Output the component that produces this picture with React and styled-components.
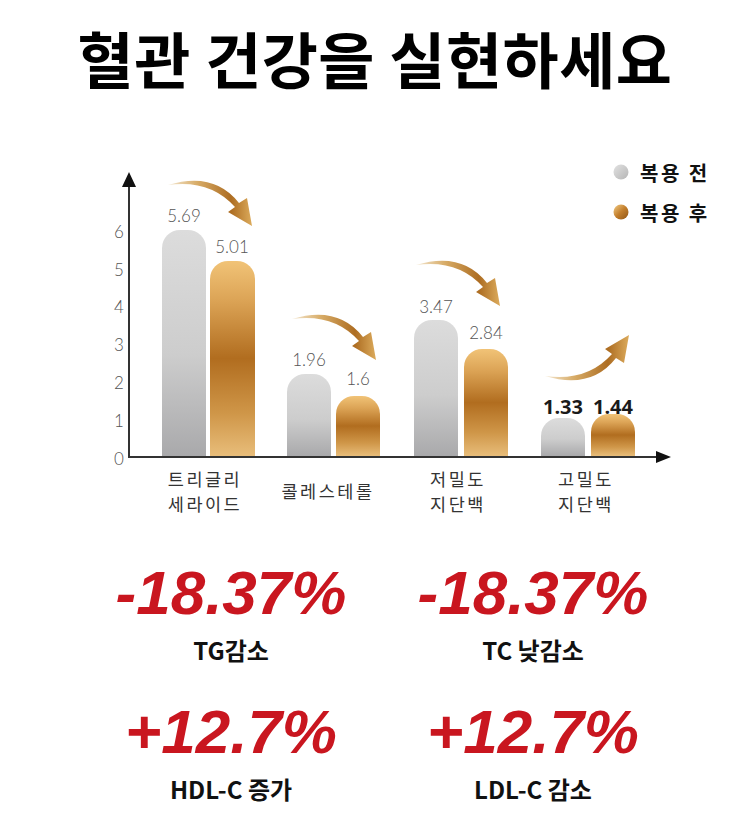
import React from "react";
import styled, { createGlobalStyle } from "styled-components";

const GlobalStyle = createGlobalStyle`
  body {
    margin: 0;
    background: #ffffff;
  }
`;

const Page = styled.div`
  width: 750px;
  height: 815px;
  background: #ffffff;
  font-family: "Noto Sans CJK KR", "Noto Sans", sans-serif;
  overflow: hidden;
`;

const Title = styled.h1`
  box-sizing: border-box;
  height: 120px;
  margin: 0;
  padding-bottom: 6px;
  display: flex;
  align-items: center;
  justify-content: center;
  font-size: 61px;
  font-weight: 700;
  color: #000;
  letter-spacing: 0.5px;
`;

const Chart = styled.svg`
  display: block;
  width: 750px;
  height: 410px;
`;

const Stats = styled.div`
  display: grid;
  grid-template-columns: 302px 302px;
  row-gap: 32px;
  margin: 28px 0 0 80px;
`;

const Stat = styled.div`
  display: flex;
  flex-direction: column;
  align-items: center;
`;

const Value = styled.div`
  font-family: "Liberation Sans", Arial, sans-serif;
  font-style: italic;
  font-weight: 700;
  font-size: 62px;
  line-height: 70px;
  color: #c9161f;
  white-space: nowrap;
`;

const Label = styled.div`
  margin-top: 7px;
  font-size: 24px;
  line-height: 30px;
  font-weight: 700;
  color: #111;
  white-space: nowrap;
`;

const GREY = "url(#greyBar)";
const GOLD = "url(#goldBar)";
const BOTTOM = 456;

const bars = [
  { x: 162, w: 44, top: 230, fill: GREY },
  { x: 210, w: 45, top: 261, fill: GOLD },
  { x: 287, w: 44, top: 374, fill: GREY },
  { x: 336, w: 44, top: 396, fill: GOLD },
  { x: 414, w: 44, top: 320, fill: GREY },
  { x: 464, w: 44, top: 349, fill: GOLD },
  { x: 541, w: 44, top: 418, fill: GREY },
  { x: 591, w: 44, top: 414, fill: GOLD },
];

const values = [
  { x: 184, y: 215, t: "5.69" },
  { x: 232, y: 246, t: "5.01" },
  { x: 309, y: 359, t: "1.96" },
  { x: 358, y: 378, t: "1.6" },
  { x: 436, y: 306, t: "3.47" },
  { x: 486, y: 332, t: "2.84" },
];

const arrows = [
  "translate(168 182)",
  "translate(292 316)",
  "translate(416 262)",
  "translate(545 379) scale(1 -1)",
];

const categories = [
  { x: 205, lines: ["트리글리", "세라이드"] },
  { x: 328, lines: ["콜레스테롤"] },
  { x: 458, lines: ["저밀도", "지단백"] },
  { x: 586, lines: ["고밀도", "지단백"] },
];

const stats = [
  { v: "-18.37%", l: "TG감소" },
  { v: "-18.37%", l: "TC 낮감소" },
  { v: "+12.7%", l: "HDL-C 증가" },
  { v: "+12.7%", l: "LDL-C 감소" },
];

function barPath({ x, w, top }) {
  const r = 18;
  return `M${x},${BOTTOM} V${top + r} A${r},${r} 0 0 1 ${x + r},${top} H${x + w - r} A${r},${r} 0 0 1 ${x + w},${top + r} V${BOTTOM} Z`;
}

// tapered curved arrow, tail at 0,3 and tip at 84,44
const ARROW = "M0,3 Q46,-11 71,21 L79,16 L84,44 L60,30 L67,25 Q42,-3 0,3 Z";

const numFont = { fontFamily: "Lato, 'Open Sans', sans-serif", fontWeight: 300 };

function BarChart() {
  return (
    <Chart viewBox="0 120 750 410">
      <defs>
        <linearGradient id="greyBar" x1="0" y1="0" x2="0" y2="1">
          <stop offset="0" stopColor="#dcdcdc" />
          <stop offset="0.55" stopColor="#cdcdcd" />
          <stop offset="1" stopColor="#a9a9ab" />
        </linearGradient>
        <linearGradient id="goldBar" x1="0" y1="0" x2="0" y2="1">
          <stop offset="0" stopColor="#f1c377" />
          <stop offset="0.2" stopColor="#dca456" />
          <stop offset="0.5" stopColor="#b16d1f" />
          <stop offset="0.78" stopColor="#cf9648" />
          <stop offset="1" stopColor="#e8bd7a" />
        </linearGradient>
        <linearGradient id="arrowFill" x1="0" y1="0" x2="1" y2="0">
          <stop offset="0" stopColor="#f4e8d2" />
          <stop offset="0.35" stopColor="#d7ab66" />
          <stop offset="0.75" stopColor="#ad6d22" />
          <stop offset="1" stopColor="#dcab5c" />
        </linearGradient>
        <linearGradient id="goldDot" x1="0" y1="0" x2="1" y2="1">
          <stop offset="0" stopColor="#f3cd86" />
          <stop offset="0.5" stopColor="#c27e2c" />
          <stop offset="1" stopColor="#8f5414" />
        </linearGradient>
        <linearGradient id="greyDot" x1="0" y1="0" x2="1" y2="1">
          <stop offset="0" stopColor="#e2e2e2" />
          <stop offset="1" stopColor="#b5b5b5" />
        </linearGradient>
      </defs>

      {/* legend */}
      <circle cx="621" cy="172" r="7.5" fill="url(#greyDot)" />
      <circle cx="621" cy="212" r="7.5" fill="url(#goldDot)" />
      <g fontSize="20" fontWeight="700" fill="#111" letterSpacing="2.5" dominantBaseline="central">
        <text x="640" y="172">복용 전</text>
        <text x="640" y="212">복용 후</text>
      </g>

      {/* bars */}
      {bars.map((b, i) => (
        <path key={i} d={barPath(b)} fill={b.fill} />
      ))}

      {/* arrows */}
      {arrows.map((t, i) => (
        <path key={i} d={ARROW} transform={t} fill="url(#arrowFill)" />
      ))}

      {/* axes */}
      <g stroke="#333" strokeWidth="2">
        <line x1="129" y1="457" x2="129" y2="184" />
        <line x1="128" y1="457" x2="660" y2="457" />
      </g>
      <polygon points="122,187 136,187 129,172" fill="#111" />
      <polygon points="656,451 656,463 671,457" fill="#111" />

      <g fontSize="17" fill="#555" textAnchor="middle" dominantBaseline="central" style={numFont}>
        {[0, 1, 2, 3, 4, 5, 6].map((n) => (
          <text key={n} x="119" y={458 - n * 37.8}>
            {n}
          </text>
        ))}
        {values.map((v) => (
          <text key={v.t + v.x} x={v.x} y={v.y}>
            {v.t}
          </text>
        ))}
      </g>

      <g
        fontSize="20"
        fontWeight="700"
        fill="#1a1a1a"
        textAnchor="middle"
        dominantBaseline="central"
        style={{ fontFamily: "'Open Sans', 'Liberation Sans', sans-serif" }}
      >
        <text x="563" y="406">1.33</text>
        <text x="613" y="406">1.44</text>
      </g>

      <g fontSize="17.5" fill="#333" textAnchor="middle" dominantBaseline="central" letterSpacing="2.5">
        {categories.map((c) =>
          c.lines.length === 1 ? (
            <text key={c.x} x={c.x} y="490">
              {c.lines[0]}
            </text>
          ) : (
            c.lines.map((l, i) => (
              <text key={c.x + l} x={c.x} y={478 + i * 25}>
                {l}
              </text>
            ))
          )
        )}
      </g>
    </Chart>
  );
}

export default function App() {
  return (
    <Page>
      <GlobalStyle />
      <Title>혈관 건강을 실현하세요</Title>
      <BarChart />
      <Stats>
        {stats.map((s, i) => (
          <Stat key={i}>
            <Value>{s.v}</Value>
            <Label>{s.l}</Label>
          </Stat>
        ))}
      </Stats>
    </Page>
  );
}
